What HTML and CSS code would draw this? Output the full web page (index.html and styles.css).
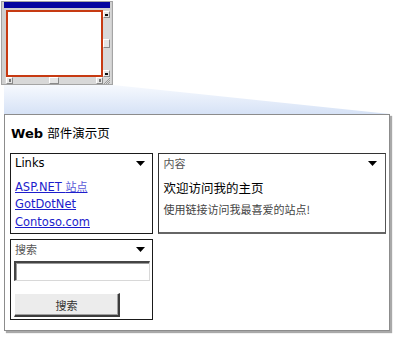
FILE: index.html
```html
<!DOCTYPE html>
<html lang="zh-CN">
<head>
<meta charset="utf-8">
<title>Web 部件演示页</title>
<link rel="stylesheet" href="styles.css">
</head>
<body>
<div class="scene">
  <div class="win">
    <div class="win-title"></div>
    <div class="win-body">
      <div class="win-zone"></div>
      <div class="vscroll">
        <span class="sbtn"><i></i></span>
        <span class="vtrack"><span class="vthumb"></span></span>
        <span class="sbtn"><i></i></span>
      </div>
    </div>
    <div class="hscroll">
      <span class="hbtn"><i></i></span>
      <span class="htrack"><span class="hthumb"></span></span>
      <span class="hbtn"><i></i></span>
      <span class="grip">
        <svg width="8" height="7" viewBox="0 0 8 7"><path d="M7 1 L1 7 M7 3 L3 7 M7 5 L5 7" stroke="#9a9a9a" stroke-width="1"/></svg>
      </span>
    </div>
  </div>
  <svg class="beam" width="399" height="29" viewBox="0 0 399 29">
    <defs>
      <linearGradient id="bg" x1="0" y1="0" x2="0" y2="1">
        <stop offset="0" stop-color="#f6f9fe"/>
        <stop offset="1" stop-color="#d6e2f6"/>
      </linearGradient>
    </defs>
    <polygon points="4,0 113,0 390,29 4,29" fill="url(#bg)"/>
  </svg>
  <div class="panel">
    <h1 class="page-title"><b>Web</b> <span class="cjk">部件演示页</span></h1>
    <div class="zones">
      <div class="col-left">
        <div class="part links">
          <div class="part-head"><span class="head-lat">Links</span><svg class="tri" width="9" height="5" viewBox="0 0 9 5"><polygon points="0,0 9,0 4.5,5" fill="#000"/></svg></div>
          <ul class="link-list">
            <li><a href="#">ASP.NET <span class="cjk">站点</span></a></li>
            <li><a href="#">GotDotNet</a></li>
            <li><a href="#">Contoso.com</a></li>
          </ul>
        </div>
        <div class="part search">
          <div class="part-head"><span class="head-cjk">搜索</span><svg class="tri" width="9" height="5" viewBox="0 0 9 5"><polygon points="0,0 9,0 4.5,5" fill="#000"/></svg></div>
          <div class="search-input"></div>
          <div class="search-btn">搜索</div>
        </div>
      </div>
      <div class="part content">
        <div class="part-head"><span class="head-cjk">内容</span><svg class="tri" width="9" height="5" viewBox="0 0 9 5"><polygon points="0,0 9,0 4.5,5" fill="#000"/></svg></div>
        <div class="welcome">欢迎访问我的主页</div>
        <div class="desc">使用链接访问我最喜爱的站点!</div>
      </div>
    </div>
  </div>
</div>
</body>
</html>
```
FILE: styles.css
```css
html, body {
  margin: 0;
  padding: 0;
  background: #fff;
}
.scene {
  width: 399px;
  height: 341px;
  display: flex;
  flex-direction: column;
  font-family: "DejaVu Sans", "Noto Sans CJK SC", sans-serif;
}
.cjk {
  font-family: "Noto Sans CJK SC", sans-serif;
}

/* small window thumbnail */
.win {
  width: 112px;
  height: 84px;
  margin: 1px 0 0 1px;
  box-sizing: border-box;
  border: 1px solid #a4a4a4;
  background: #d0d0d0;
  padding: 0 1px;
  display: flex;
  flex-direction: column;
}
.win-title {
  height: 6px;
  margin: 0 1px 2px 1px;
  background: #0606a0;
}
.win-body {
  display: flex;
  height: 67px;
  margin-left: 3px;
}
.win-zone {
  width: 99px;
  box-sizing: border-box;
  border: 2px solid #c73a12;
  background: #fff;
}
.vscroll {
  width: 8px;
  display: flex;
  flex-direction: column;
  background: #d8d8d8;
}
.sbtn, .hbtn {
  width: 7px;
  height: 7px;
  box-sizing: border-box;
  background: #e6e6e6;
  border: 1px solid #fff;
  border-right-color: #8a8a8a;
  border-bottom-color: #8a8a8a;
  display: flex;
  align-items: center;
  justify-content: center;
}
.sbtn { margin-top: 1px; }
.sbtn i {
  width: 3px;
  height: 2px;
  background: #111;
}
.hbtn i {
  width: 2px;
  height: 3px;
  background: #777;
}
.vtrack {
  flex: 1;
  display: flex;
  flex-direction: column;
  justify-content: center;
}
.vthumb {
  width: 7px;
  height: 9px;
  box-sizing: border-box;
  background: #e4e4e4;
  border: 1px solid #fff;
  border-right-color: #8a8a8a;
  border-bottom-color: #8a8a8a;
}
.hscroll {
  height: 7px;
  display: flex;
  margin-left: 2px;
  background: #d8d8d8;
}
.hbtn { margin-left: 1px; }
.htrack {
  flex: 1;
  display: flex;
  justify-content: center;
}
.hthumb {
  width: 10px;
  height: 7px;
  box-sizing: border-box;
  background: #e4e4e4;
  border: 1px solid #fff;
  border-right-color: #8a8a8a;
  border-bottom-color: #8a8a8a;
}
.grip {
  width: 8px;
  height: 7px;
  display: block;
}
.grip svg { display: block; }

.beam {
  display: block;
  flex: none;
}

/* main page panel */
.panel {
  width: 386px;
  height: 217px;
  margin-left: 4px;
  box-sizing: border-box;
  border: 1px solid #8c8c8c;
  box-shadow: 2px 2px 1px #a9a9a9;
  background: #fff;
  padding: 10px 3px 0 5px;
}
.page-title {
  margin: 0 0 0 1px;
  height: 16px;
  line-height: 16px;
  font-size: 13px;
  font-weight: normal;
  color: #000;
  white-space: nowrap;
}
.page-title b {
  font-weight: bold;
}
.page-title .cjk {
  font-size: 12.5px;
}
.zones {
  display: flex;
  gap: 5px;
  margin-top: 12px;
}
.col-left {
  width: 143px;
  display: flex;
  flex-direction: column;
  gap: 5px;
}
.part {
  box-sizing: border-box;
  border: 1px solid #1a1a1a;
  background: #fff;
}
.links, .search {
  height: 81px;
}
.content {
  width: 229px;
  height: 81px;
  border-color: #333;
  border-bottom: 2px solid #666;
  border-right: 1px solid #555;
}
.part-head {
  display: flex;
  justify-content: space-between;
  align-items: center;
  height: 14px;
  line-height: 14px;
  padding: 2px 7px 0 4px;
  font-size: 11.5px;
}
.content .part-head {
  padding-left: 5px;
  padding-right: 8px;
}
.head-lat {
  color: #000;
}
.head-cjk {
  font-family: "Noto Sans CJK SC", sans-serif;
  font-size: 11px;
  color: #555;
}
.tri { display: block; }

.link-list {
  list-style: none;
  margin: 7px 0 0 0;
  padding: 0 0 0 4px;
}
.link-list li {
  height: 18px;
  line-height: 18px;
  font-size: 11.5px;
}
.link-list a {
  color: #1d1dcc;
  text-decoration: underline;
}
.link-list .cjk {
  font-size: 11px;
  color: #5a5ad8;
}

.search-input {
  width: 136px;
  height: 20px;
  margin: 5px 0 0 3px;
  box-sizing: border-box;
  background: #fff;
  border: 2px solid #444;
  border-right: 1px solid #d8d8d8;
  border-bottom: 1px solid #d8d8d8;
  box-shadow: inset 1px 1px 0 #9a9a9a;
}
.search-btn {
  width: 106px;
  height: 24px;
  margin: 12px 0 0 3px;
  box-sizing: border-box;
  background: #ececec;
  border: 1px solid #fff;
  border-right: 2px solid #3c3c3c;
  border-bottom: 2px solid #3c3c3c;
  box-shadow: inset -1px -1px 0 #a0a0a0;
  font-family: "Noto Sans CJK SC", sans-serif;
  font-size: 11px;
  color: #333;
  display: flex;
  align-items: center;
  justify-content: center;
}

.welcome {
  margin: 10px 0 0 5px;
  height: 16px;
  line-height: 16px;
  font-family: "Noto Sans CJK SC", sans-serif;
  font-size: 12.5px;
  color: #000;
}
.desc {
  margin: 6px 0 0 5px;
  height: 14px;
  line-height: 14px;
  font-family: "Noto Sans CJK SC", sans-serif;
  font-size: 11px;
  color: #444;
}
```
